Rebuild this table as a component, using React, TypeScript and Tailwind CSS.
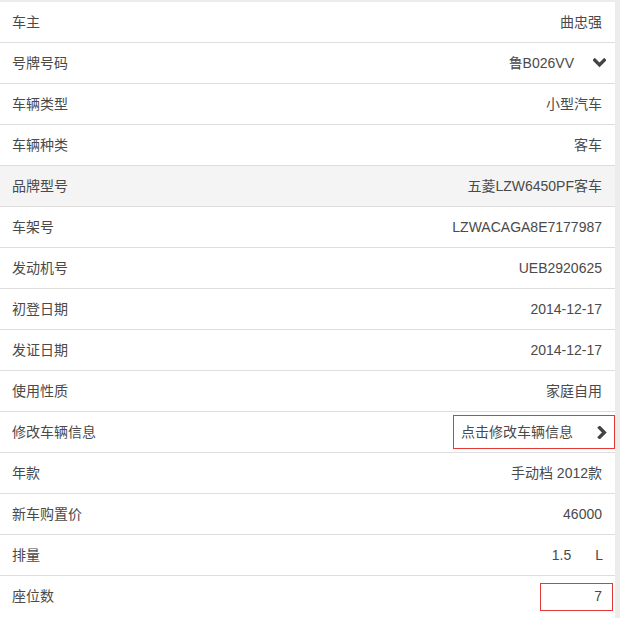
type Row = {
  label: string;
  value?: string;
  kind?: 'plain' | 'select' | 'link' | 'unit' | 'input';
  unit?: string;
  shaded?: boolean;
};

const ROWS: Row[] = [
  { label: '车主', value: '曲忠强' },
  { label: '号牌号码', value: '鲁B026VV', kind: 'select' },
  { label: '车辆类型', value: '小型汽车' },
  { label: '车辆种类', value: '客车' },
  { label: '品牌型号', value: '五菱LZW6450PF客车', shaded: true },
  { label: '车架号', value: 'LZWACAGA8E7177987' },
  { label: '发动机号', value: 'UEB2920625' },
  { label: '初登日期', value: '2014-12-17' },
  { label: '发证日期', value: '2014-12-17' },
  { label: '使用性质', value: '家庭自用' },
  { label: '修改车辆信息', value: '点击修改车辆信息', kind: 'link' },
  { label: '年款', value: '手动档 2012款' },
  { label: '新车购置价', value: '46000' },
  { label: '排量', value: '1.5', kind: 'unit', unit: 'L' },
  { label: '座位数', value: '7', kind: 'input' },
];

// bold chevrons, drawn like the old font-awesome ones
function ChevronDown() {
  return (
    <svg width="13" height="10" viewBox="0 0 13 10" className="ml-[19px]">
      <path d="M1.8 2.2 L6.5 6.9 L11.2 2.2" fill="none" stroke="#444" strokeWidth="3.4" strokeLinecap="square" />
    </svg>
  );
}

function ChevronRight() {
  return (
    <svg width="10" height="13" viewBox="0 0 10 13">
      <path d="M2.6 1.8 L7.3 6.5 L2.6 11.2" fill="none" stroke="#444" strokeWidth="3.4" strokeLinecap="square" />
    </svg>
  );
}

function RowValue({ row }: { row: Row }) {
  switch (row.kind) {
    case 'select':
      return (
        <div className="flex items-center pr-[9px]">
          <span>{row.value}</span>
          <ChevronDown />
        </div>
      );
    case 'link':
      return (
        <div className="flex h-[34px] w-[162px] items-center justify-between border border-[#e53935] pl-[7px] pr-[7px]">
          <span>{row.value}</span>
          <ChevronRight />
        </div>
      );
    case 'unit':
      return (
        <div className="flex items-center pr-[12px]">
          <span>{row.value}</span>
          <span className="ml-[24px]">{row.unit}</span>
        </div>
      );
    case 'input':
      return (
        <div className="mr-[2px] flex h-[28px] w-[73px] items-center justify-end border border-[#e53935] pr-[10px]">
          {row.value}
        </div>
      );
    default:
      return <span className="pr-[13px]">{row.value}</span>;
  }
}

export default function App() {
  return (
    <div
      className="flex min-h-[618px] w-[620px] bg-[#ececec]"
      style={{ fontFamily: '"Liberation Sans", "Noto Sans CJK SC", sans-serif' }}
    >
      <div className="mt-[2px] w-[615px] bg-white text-[14px] text-[#4a4a4a]">
        {ROWS.map((row, i) => (
          <div
            key={row.label}
            className={`flex h-[41px] items-center justify-between pl-[12px] ${
              i < ROWS.length - 1 ? 'border-b border-[#ddd]' : ''
            } ${row.shaded ? 'bg-[#f4f4f4]' : ''}`}
          >
            <span>{row.label}</span>
            <RowValue row={row} />
          </div>
        ))}
      </div>
    </div>
  );
}
